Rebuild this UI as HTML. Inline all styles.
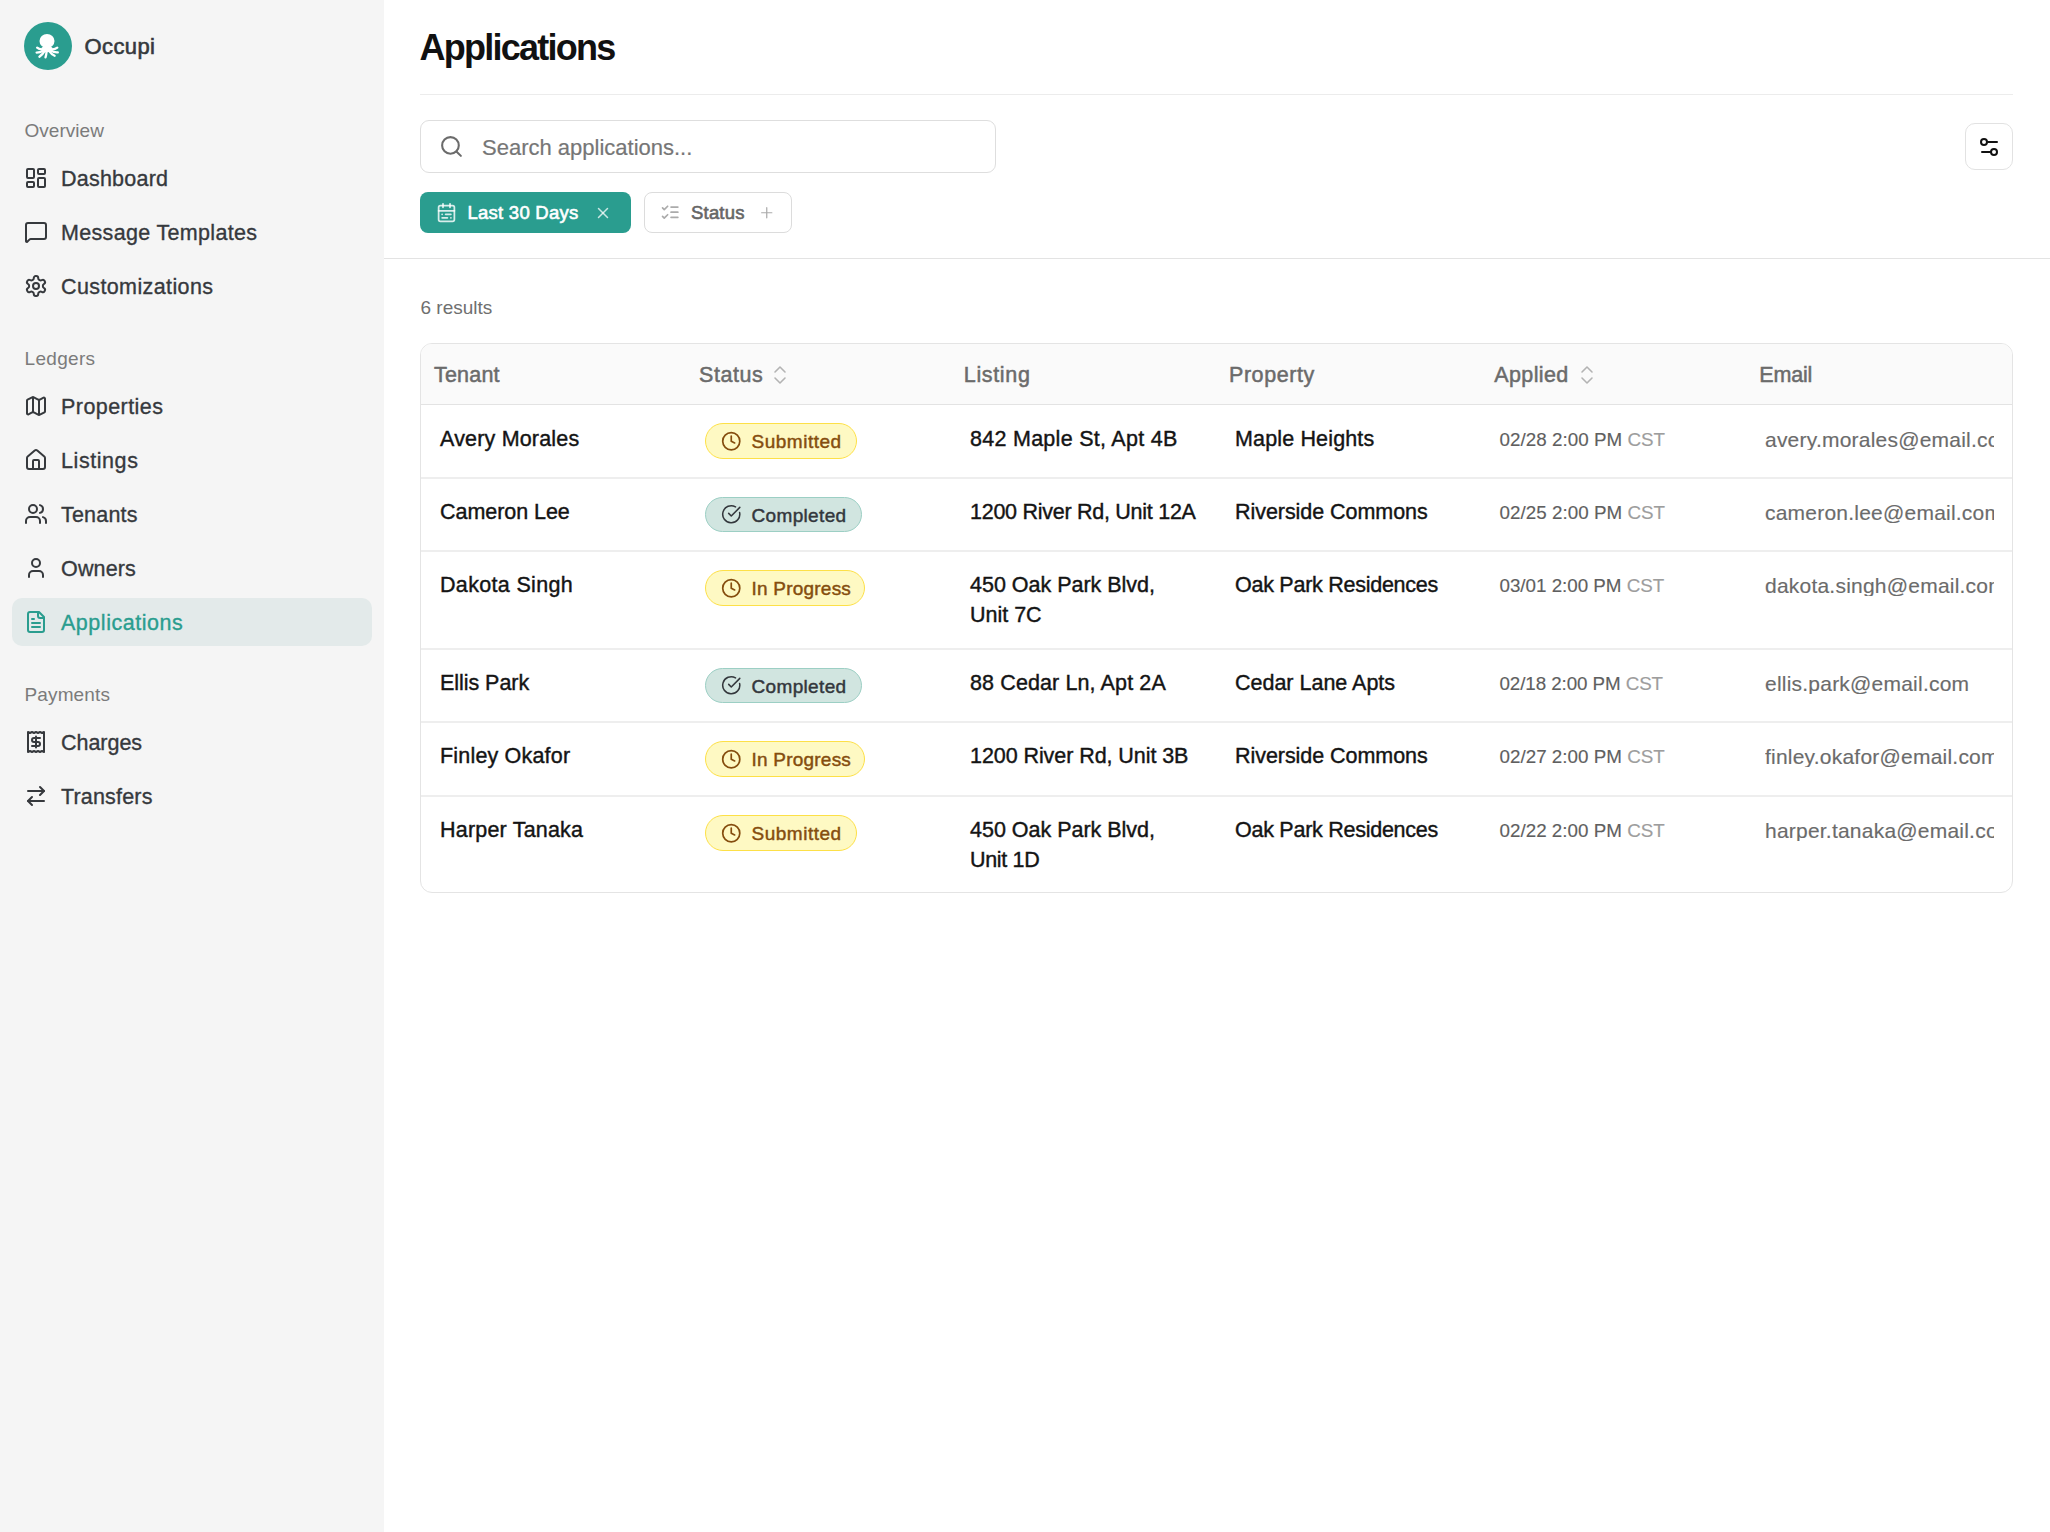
<!DOCTYPE html>
<html><head><meta charset="utf-8">
<style>
*{box-sizing:border-box;margin:0;padding:0}
html,body{width:2050px;height:1532px;overflow:hidden;background:#fff;font-family:"Liberation Sans",sans-serif}
.abs{position:absolute}
.t{position:absolute;white-space:nowrap;line-height:1}
svg.i{position:absolute;fill:none;stroke:currentColor;stroke-width:2;stroke-linecap:round;stroke-linejoin:round}
#side{position:absolute;left:0;top:0;width:384px;height:1532px;background:#f5f5f5}
.sec{font-size:19px;color:#7b7b7b}
.nav{font-size:21.5px;color:#36393d;-webkit-text-stroke:0.35px currentColor}
.navi{color:#36393d;width:24px;height:24px;left:24px}
#active{left:12px;top:598px;width:360px;height:48px;border-radius:10px;background:#e3eaea}
.hd{font-size:21.5px;color:#6b6b6b;-webkit-text-stroke:0.5px currentColor;letter-spacing:0.3px}
.td{font-size:21.5px;color:#141414;-webkit-text-stroke:0.4px currentColor;letter-spacing:0.15px}
.dt{font-size:18.8px;color:#5f5f5f;-webkit-text-stroke:0.15px currentColor}
.em{font-size:21px;color:#6b6b6b;-webkit-text-stroke:0.15px currentColor;letter-spacing:0.22px}
.badge{height:36px;border-radius:18px;border:1.6px solid}
.b-sub,.b-prog{background:#fef9c3;border-color:#fde047}
.b-comp{background:#d1e5e0;border-color:#9ccfc4;height:35.4px;border-width:1.4px}
.b-subi,.b-progi{color:#854d0e}
.b-compi{color:#33373c;stroke-width:1.8!important}
.bt{font-size:19px;-webkit-text-stroke:0.45px currentColor;letter-spacing:0.1px}
.b-subt,.b-progt{color:#854d0e}
.b-compt{color:#33373c}
</style></head><body>
<div id="side">
  <div class="abs" style="left:24px;top:22px;width:48px;height:48px;border-radius:50%;background:#2a9d8f"></div>
  <svg class="abs" style="left:24px;top:22px" width="48" height="48" viewBox="0 0 48 48">
    <g fill="#fff"><ellipse cx="23" cy="19" rx="7.5" ry="7.1"/><ellipse cx="23" cy="27" rx="5.8" ry="3.2"/></g>
    <g fill="none" stroke="#fff" stroke-width="2.3" stroke-linecap="round">
      <path d="M19.5 27.2 Q15.8 28 13.1 25.7"/>
      <path d="M19.5 28.6 Q16.2 30.6 12.6 30.6"/>
      <path d="M20.6 29.2 Q18.6 32.6 15.4 34.7"/>
      <path d="M22.6 29.3 Q22.4 32.6 21.5 35.4"/>
      <path d="M25.3 29.2 Q27.6 32.6 30.6 33.8"/>
      <path d="M26.6 28.6 Q30.2 30.6 33.8 30.3"/>
      <path d="M26.6 27.2 Q30.4 28 33.3 25.7"/>
    </g>
  </svg>
  <div class="t" style="left:84.5px;top:35.88px;font-size:22px;color:#35393d;-webkit-text-stroke:0.6px currentColor;letter-spacing:0.4px">Occupi</div>
  <div class="t sec" style="left:24.5px;top:120.92px;letter-spacing:0.029px">Overview</div>
  <div class="t sec" style="left:24.5px;top:348.92px;letter-spacing:0.317px">Ledgers</div>
  <div class="t sec" style="left:24.5px;top:684.92px;letter-spacing:0.129px">Payments</div>
  <div id="active" class="abs"></div>
  <svg class="i navi" style="top:166px" viewBox="0 0 24 24"><rect width="7" height="9" x="3" y="3" rx="1"/><rect width="7" height="5" x="14" y="3" rx="1"/><rect width="7" height="9" x="14" y="12" rx="1"/><rect width="7" height="5" x="3" y="16" rx="1"/></svg>
  <div class="t nav" style="left:61px;top:168.70px;letter-spacing:0.225px">Dashboard</div>
  <svg class="i navi" style="top:220px" viewBox="0 0 24 24"><path d="M22 17a2 2 0 0 1-2 2H6.828a2 2 0 0 0-1.414.586l-2.202 2.202A.71.71 0 0 1 2 21.286V5a2 2 0 0 1 2-2h16a2 2 0 0 1 2 2z"/></svg>
  <div class="t nav" style="left:61px;top:222.70px;letter-spacing:0.325px">Message Templates</div>
  <svg class="i navi" style="top:274px" viewBox="0 0 24 24"><path d="M12.22 2h-.44a2 2 0 0 0-2 2v.18a2 2 0 0 1-1 1.73l-.43.25a2 2 0 0 1-2 0l-.15-.08a2 2 0 0 0-2.73.73l-.22.38a2 2 0 0 0 .73 2.73l.15.1a2 2 0 0 1 1 1.72v.51a2 2 0 0 1-1 1.74l-.15.09a2 2 0 0 0-.73 2.73l.22.38a2 2 0 0 0 2.73.73l.15-.08a2 2 0 0 1 2 0l.43.25a2 2 0 0 1 1 1.73V20a2 2 0 0 0 2 2h.44a2 2 0 0 0 2-2v-.18a2 2 0 0 1 1-1.73l.43-.25a2 2 0 0 1 2 0l.15.08a2 2 0 0 0 2.73-.73l.22-.39a2 2 0 0 0-.73-2.730l-.15-.08a2 2 0 0 1-1-1.74v-.5a2 2 0 0 1 1-1.74l.15-.09a2 2 0 0 0 .73-2.73l-.22-.38a2 2 0 0 0-2.73-.73l-.15.08a2 2 0 0 1-2 0l-.43-.25a2 2 0 0 1-1-1.73V4a2 2 0 0 0-2-2z"/><circle cx="12" cy="12" r="3"/></svg>
  <div class="t nav" style="left:61px;top:276.70px;letter-spacing:0.385px">Customizations</div>
  <svg class="i navi" style="top:394px" viewBox="0 0 24 24"><path d="M14.106 5.553a2 2 0 0 0 1.788 0l3.659-1.83A1 1 0 0 1 21 4.619v12.764a1 1 0 0 1-.553.894l-4.553 2.277a2 2 0 0 1-1.788 0l-4.212-2.106a2 2 0 0 0-1.788 0l-3.659 1.830A1 1 0 0 1 3 19.381V6.618a1 1 0 0 1 .553-.894l4.553-2.277a2 2 0 0 1 1.788 0z"/><path d="M15 5.764v15"/><path d="M9 3.236v15"/></svg>
  <div class="t nav" style="left:61px;top:396.70px;letter-spacing:0.444px">Properties</div>
  <svg class="i navi" style="top:448px" viewBox="0 0 24 24"><path d="M15 21v-8a1 1 0 0 0-1-1h-4a1 1 0 0 0-1 1v8"/><path d="M3 10a2 2 0 0 1 .709-1.528l7-5.999a2 2 0 0 1 2.582 0l7 5.999A2 2 0 0 1 21 10v9a2 2 0 0 1-2 2H5a2 2 0 0 1-2-2z"/></svg>
  <div class="t nav" style="left:61px;top:450.70px;letter-spacing:0.571px">Listings</div>
  <svg class="i navi" style="top:502px" viewBox="0 0 24 24"><path d="M16 21v-2a4 4 0 0 0-4-4H6a4 4 0 0 0-4 4v2"/><circle cx="9" cy="7" r="4"/><path d="M22 21v-2a4 4 0 0 0-3-3.87"/><path d="M16 3.13a4 4 0 0 1 0 7.75"/></svg>
  <div class="t nav" style="left:61px;top:504.70px;letter-spacing:0.200px">Tenants</div>
  <svg class="i navi" style="top:556px" viewBox="0 0 24 24"><path d="M19 21v-2a4 4 0 0 0-4-4H9a4 4 0 0 0-4 4v2"/><circle cx="12" cy="7" r="4"/></svg>
  <div class="t nav" style="left:61px;top:558.70px;letter-spacing:0.160px">Owners</div>
  <svg class="i navi" style="top:610px;color:#2a9d8f" viewBox="0 0 24 24"><path d="M15 2H6a2 2 0 0 0-2 2v16a2 2 0 0 0 2 2h12a2 2 0 0 0 2-2V7Z"/><path d="M14 2v4a2 2 0 0 0 2 2h4"/><path d="M10 9H8"/><path d="M16 13H8"/><path d="M16 17H8"/></svg>
  <div class="t nav" style="left:61px;top:612.70px;color:#2a9d8f;letter-spacing:0.527px">Applications</div>
  <svg class="i navi" style="top:730px" viewBox="0 0 24 24"><path d="M4 2v20l2-1 2 1 2-1 2 1 2-1 2 1 2-1 2 1V2l-2 1-2-1-2 1-2-1-2 1-2-1-2 1Z"/><path d="M16 8h-6a2 2 0 1 0 0 4h4a2 2 0 1 1 0 4H8"/><path d="M12 17.5v-11"/></svg>
  <div class="t nav" style="left:61px;top:732.70px;letter-spacing:-0.033px">Charges</div>
  <svg class="i navi" style="top:784px" viewBox="0 0 24 24"><path d="m16 3 4 4-4 4"/><path d="M20 7H4"/><path d="m8 21-4-4 4-4"/><path d="M4 17h16"/></svg>
  <div class="t nav" style="left:61px;top:786.70px;letter-spacing:0.175px">Transfers</div>
</div>
<div id="main">
  <div class="t" style="left:419.5px;top:29.53px;font-size:36px;font-weight:bold;color:#111;letter-spacing:-1.75px">Applications</div>
  <div class="abs" style="left:420px;top:94px;width:1593px;height:1px;background:#ececec"></div>
  <div class="abs" style="left:420px;top:120px;width:576px;height:53px;border:1px solid #dedede;border-radius:9px"></div>
  <svg class="i" style="left:438.9px;top:133.9px;color:#6b6b6b" width="25" height="25" viewBox="0 0 24 24"><circle cx="11" cy="11" r="8"/><path d="m21 21-4.3-4.3"/></svg>
  <div class="t" style="left:482px;top:136.88px;font-size:22px;color:#767676;-webkit-text-stroke:0.2px currentColor">Search applications...</div>
  <div class="abs" style="left:1965px;top:123px;width:48px;height:47px;border:1px solid #e2e2e2;border-radius:10px"></div>
  <svg class="i" style="left:1976.7px;top:134.5px;color:#111" width="24" height="24" viewBox="0 0 24 24"><path d="M20 7h-9"/><path d="M14 17H5"/><circle cx="17" cy="17" r="3"/><circle cx="7" cy="7" r="3"/></svg>

  <div class="abs" style="left:420px;top:192px;width:211px;height:41px;border-radius:8px;background:#2a9d8f"></div>
  <svg class="i" style="left:436.4px;top:202.1px;color:rgba(255,255,255,0.82)" width="21" height="21" viewBox="0 0 24 24"><rect width="18" height="18" x="3" y="4" rx="2"/><path d="M16 2v4"/><path d="M3 10h18"/><path d="M8 2v4"/><path d="M17 14h-6"/><path d="M13 18H7"/><path d="M7 14h.01"/><path d="M17 18h.01"/></svg>
  <div class="t" style="left:467.5px;top:203.94px;font-size:18.5px;color:#fff;-webkit-text-stroke:0.6px currentColor;letter-spacing:0.25px">Last 30 Days</div>
  <svg class="i" style="left:593.75px;top:203.75px;color:rgba(255,255,255,0.75);stroke-width:2" width="18" height="18" viewBox="0 0 24 24"><path d="M18 6 6 18"/><path d="m6 6 12 12"/></svg>

  <div class="abs" style="left:644px;top:192px;width:148px;height:41px;border-radius:8px;border:1px solid #dcdcdc"></div>
  <svg class="i" style="left:660.2px;top:202.4px;color:#ababab" width="20.4" height="20.4" viewBox="0 0 24 24"><path d="m3 17 2 2 4-4"/><path d="m3 7 2 2 4-4"/><path d="M13 6h8"/><path d="M13 12h8"/><path d="M13 18h8"/></svg>
  <div class="t" style="left:691px;top:203.94px;font-size:18.5px;color:#666;-webkit-text-stroke:0.6px currentColor;letter-spacing:0.2px">Status</div>
  <svg class="i" style="left:758.3px;top:203.6px;color:#ababab;stroke-width:1.7" width="17.5" height="17.5" viewBox="0 0 24 24"><path d="M5 12h14"/><path d="M12 5v14"/></svg>

  <div class="abs" style="left:384px;top:258px;width:1666px;height:1px;background:#e3e3e3"></div>
  <div class="t" style="left:420.5px;top:298.22px;font-size:19px;color:#6f6f6f">6 results</div>
  <div id="tbl" class="abs" style="left:420px;top:343px;width:1593px;height:550px;border:1px solid #e4e4e4;border-radius:12px;overflow:hidden">
    <div class="abs" style="left:0;top:0;width:1591px;height:60px;background:#fafafa"></div>
    <div class="abs" style="left:0;top:60px;width:1591px;height:1px;background:#e3e3e3"></div>
    <div class="abs" style="left:0;top:133px;width:1591px;height:2px;background:#eeeeee"></div>
    <div class="abs" style="left:0;top:206px;width:1591px;height:2px;background:#eeeeee"></div>
    <div class="abs" style="left:0;top:304px;width:1591px;height:2px;background:#eeeeee"></div>
    <div class="abs" style="left:0;top:377px;width:1591px;height:2px;background:#eeeeee"></div>
    <div class="abs" style="left:0;top:451px;width:1591px;height:2px;background:#eeeeee"></div>
    <div class="t hd" style="left:13.0px;top:20.6px;letter-spacing:0.2px">Tenant</div>
    <div class="t hd" style="left:278.0px;top:20.6px;letter-spacing:0.54px">Status</div>
    <div class="t hd" style="left:542.8px;top:20.6px;letter-spacing:0.65px">Listing</div>
    <div class="t hd" style="left:808.0px;top:20.6px;letter-spacing:0.56px">Property</div>
    <div class="t hd" style="left:1073.3px;top:20.6px;letter-spacing:0.38px">Applied</div>
    <div class="t hd" style="left:1338.3px;top:20.6px;letter-spacing:-0.18px">Email</div>
    <svg class="i" style="left:347.0px;top:18.6px;color:#b3b3b3;stroke-width:1.6" width="24" height="24" viewBox="0 0 24 24"><path d="m7 15 5 5 5-5"/><path d="m7 9 5-5 5 5"/></svg>
    <svg class="i" style="left:1153.9px;top:18.6px;color:#b3b3b3;stroke-width:1.6" width="24" height="24" viewBox="0 0 24 24"><path d="m7 15 5 5 5-5"/><path d="m7 9 5-5 5 5"/></svg>
    <div class="t td" style="left:19.0px;top:85.1px;letter-spacing:0.183px">Avery Morales</div>
    <div class="abs badge b-sub" style="left:283.5px;top:79.0px;width:152.6px"></div>
    <svg class="i b-subi" style="left:299.8px;top:87.0px" width="20.5" height="20.5" viewBox="0 0 24 24"><circle cx="12" cy="12" r="10"/><path d="M12 6v6l4 2"/></svg>
    <div class="t bt b-subt" style="left:330.5px;top:87.9px;letter-spacing:0.51px">Submitted</div>
    <div class="t td" style="left:549.0px;top:85.1px;letter-spacing:0.276px">842 Maple St, Apt 4B</div>
    <div class="t td" style="left:814.0px;top:85.1px;letter-spacing:0.150px">Maple Heights</div>
    <div class="t dt" style="left:1078.5px;top:87.1px;letter-spacing:0.037px">02/28 2:00 PM <span style="color:#9d9d9d">CST</span></div>
    <div class="t em" style="left:1344.0px;top:85.2px;width:229px;overflow:hidden">avery.morales@email.com</div>
    <div class="t td" style="left:19.0px;top:158.2px;letter-spacing:-0.050px">Cameron Lee</div>
    <div class="abs badge b-comp" style="left:283.5px;top:153.0px;width:157.5px"></div>
    <svg class="i b-compi" style="left:299.8px;top:160.1px" width="20.5" height="20.5" viewBox="0 0 24 24"><path d="M21.801 10A10 10 0 1 1 17 3.335"/><path d="m9 11 3 3L22 4"/></svg>
    <div class="t bt b-compt" style="left:330.5px;top:161.9px;letter-spacing:0.34px">Completed</div>
    <div class="t td" style="left:549.0px;top:158.2px;letter-spacing:-0.269px">1200 River Rd, Unit 12A</div>
    <div class="t td" style="left:814.0px;top:158.2px;letter-spacing:-0.050px">Riverside Commons</div>
    <div class="t dt" style="left:1078.5px;top:160.2px;letter-spacing:0.037px">02/25 2:00 PM <span style="color:#9d9d9d">CST</span></div>
    <div class="t em" style="left:1344.0px;top:158.3px;width:229px;overflow:hidden">cameron.lee@email.com</div>
    <div class="t td" style="left:19.0px;top:231.2px;letter-spacing:0.332px">Dakota Singh</div>
    <div class="abs badge b-prog" style="left:283.5px;top:226.0px;width:160.4px"></div>
    <svg class="i b-progi" style="left:299.8px;top:234.0px" width="20.5" height="20.5" viewBox="0 0 24 24"><circle cx="12" cy="12" r="10"/><path d="M12 6v6l4 2"/></svg>
    <div class="t bt b-progt" style="left:330.5px;top:234.9px;letter-spacing:0.22px">In Progress</div>
    <div class="t td" style="left:549.0px;top:231.2px;letter-spacing:-0.015px">450 Oak Park Blvd,</div>
    <div class="t td" style="left:549.0px;top:260.8px;letter-spacing:-0.016px">Unit 7C</div>
    <div class="t td" style="left:814.0px;top:231.2px;letter-spacing:-0.261px">Oak Park Residences</div>
    <div class="t dt" style="left:1078.5px;top:233.2px;letter-spacing:-0.012px">03/01 2:00 PM <span style="color:#9d9d9d">CST</span></div>
    <div class="t em" style="left:1344.0px;top:231.3px;width:229px;overflow:hidden">dakota.singh@email.com</div>
    <div class="t td" style="left:19.0px;top:329.2px;letter-spacing:-0.050px">Ellis Park</div>
    <div class="abs badge b-comp" style="left:283.5px;top:324.0px;width:157.5px"></div>
    <svg class="i b-compi" style="left:299.8px;top:331.1px" width="20.5" height="20.5" viewBox="0 0 24 24"><path d="M21.801 10A10 10 0 1 1 17 3.335"/><path d="m9 11 3 3L22 4"/></svg>
    <div class="t bt b-compt" style="left:330.5px;top:332.9px;letter-spacing:0.34px">Completed</div>
    <div class="t td" style="left:549.0px;top:329.2px;letter-spacing:0.116px">88 Cedar Ln, Apt 2A</div>
    <div class="t td" style="left:814.0px;top:329.2px;letter-spacing:-0.007px">Cedar Lane Apts</div>
    <div class="t dt" style="left:1078.5px;top:331.2px;letter-spacing:-0.088px">02/18 2:00 PM <span style="color:#9d9d9d">CST</span></div>
    <div class="t em" style="left:1344.0px;top:329.3px;width:229px;overflow:hidden">ellis.park@email.com</div>
    <div class="t td" style="left:19.0px;top:402.2px;letter-spacing:0.183px">Finley Okafor</div>
    <div class="abs badge b-prog" style="left:283.5px;top:397.0px;width:160.4px"></div>
    <svg class="i b-progi" style="left:299.8px;top:405.0px" width="20.5" height="20.5" viewBox="0 0 24 24"><circle cx="12" cy="12" r="10"/><path d="M12 6v6l4 2"/></svg>
    <div class="t bt b-progt" style="left:330.5px;top:405.9px;letter-spacing:0.22px">In Progress</div>
    <div class="t td" style="left:549.0px;top:402.2px;letter-spacing:-0.069px">1200 River Rd, Unit 3B</div>
    <div class="t td" style="left:814.0px;top:402.2px;letter-spacing:-0.050px">Riverside Commons</div>
    <div class="t dt" style="left:1078.5px;top:404.2px;letter-spacing:0.025px">02/27 2:00 PM <span style="color:#9d9d9d">CST</span></div>
    <div class="t em" style="left:1344.0px;top:402.3px;width:229px;overflow:hidden">finley.okafor@email.com</div>
    <div class="t td" style="left:19.0px;top:476.2px;letter-spacing:0.200px">Harper Tanaka</div>
    <div class="abs badge b-sub" style="left:283.5px;top:471.0px;width:152.6px"></div>
    <svg class="i b-subi" style="left:299.8px;top:479.0px" width="20.5" height="20.5" viewBox="0 0 24 24"><circle cx="12" cy="12" r="10"/><path d="M12 6v6l4 2"/></svg>
    <div class="t bt b-subt" style="left:330.5px;top:479.9px;letter-spacing:0.51px">Submitted</div>
    <div class="t td" style="left:549.0px;top:476.2px;letter-spacing:-0.015px">450 Oak Park Blvd,</div>
    <div class="t td" style="left:549.0px;top:505.8px;letter-spacing:-0.317px">Unit 1D</div>
    <div class="t td" style="left:814.0px;top:476.2px;letter-spacing:-0.261px">Oak Park Residences</div>
    <div class="t dt" style="left:1078.5px;top:478.2px;letter-spacing:0.025px">02/22 2:00 PM <span style="color:#9d9d9d">CST</span></div>
    <div class="t em" style="left:1344.0px;top:476.3px;width:229px;overflow:hidden">harper.tanaka@email.com</div>
  </div>
</div>
</body></html>
